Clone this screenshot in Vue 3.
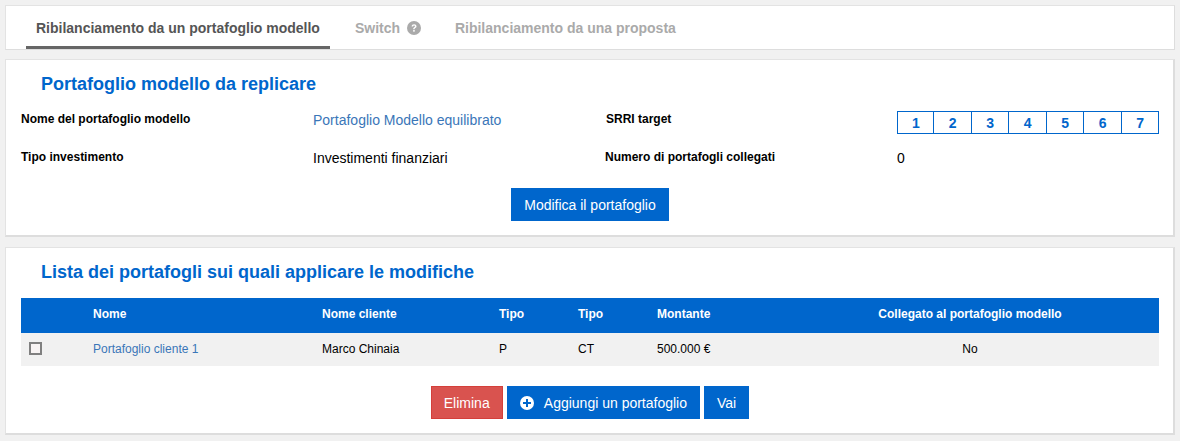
<script setup>
const srri = [1, 2, 3, 4, 5, 6, 7]
</script>

<template>
  <div class="page">
    <section class="card tabs">
      <div class="tab active">Ribilanciamento da un portafoglio modello</div>
      <div class="tab">Switch
        <svg class="help" width="14" height="14" viewBox="0 0 14 14">
          <circle cx="7" cy="7" r="7" fill="#aaa" />
          <path d="M4.6 5.4C4.7 4 5.7 3.2 7.1 3.2c1.4 0 2.4.8 2.4 2 0 1-.6 1.5-1.2 1.9-.5.3-.7.6-.7 1.2H6.2c0-1 .3-1.5 1-2 .5-.3.8-.6.8-1 0-.5-.4-.8-.9-.8-.6 0-1 .4-1 .9H4.6z" fill="#fff" />
          <rect x="6.2" y="9" width="1.5" height="1.7" fill="#fff" />
        </svg>
      </div>
      <div class="tab">Ribilanciamento da una proposta</div>
    </section>

    <section class="card model">
      <h2 class="title">Portafoglio modello da replicare</h2>
      <div class="info">
        <div class="label">Nome del portafoglio modello</div>
        <div class="value link">Portafoglio Modello equilibrato</div>
        <div class="label l2">SRRI target</div>
        <div class="srri"><span v-for="n in srri" :key="n">{{ n }}</span></div>
        <div class="label">Tipo investimento</div>
        <div class="value">Investimenti finanziari</div>
        <div class="label">Numero di portafogli collegati</div>
        <div class="value">0</div>
      </div>
      <div class="actions first"><button class="btn">Modifica il portafoglio</button></div>
    </section>

    <section class="card list">
      <h2 class="title">Lista dei portafogli sui quali applicare le modifiche</h2>
      <table>
        <colgroup>
          <col class="c0" /><col class="c1" /><col class="c2" /><col class="c3" /><col class="c4" /><col class="c5" /><col />
        </colgroup>
        <thead>
          <tr>
            <th></th><th>Nome</th><th>Nome cliente</th><th>Tipo</th><th>Tipo</th><th>Montante</th>
            <th class="center">Collegato al portafoglio modello</th>
          </tr>
        </thead>
        <tbody>
          <tr>
            <td><span class="check"></span></td>
            <td class="link">Portafoglio cliente 1</td>
            <td>Marco Chinaia</td>
            <td>P</td>
            <td>CT</td>
            <td>500.000 €</td>
            <td class="center">No</td>
          </tr>
        </tbody>
      </table>
      <div class="actions second">
        <button class="btn danger">Elimina</button>
        <button class="btn">
          <svg class="plus" width="14" height="14" viewBox="0 0 14 14">
            <circle cx="7" cy="7" r="7" fill="#fff" />
            <path d="M6 3h2v3h3v2H8v3H6V8H3V6h3z" fill="#0066cc" />
          </svg>
          Aggiungi un portafoglio
        </button>
        <button class="btn">Vai</button>
      </div>
    </section>
  </div>
</template>

<style scoped>
.page {
  width: 1180px;
  height: 441px;
  box-sizing: border-box;
  padding: 5px 5px 0;
  background: #f1f1f1;
  font-family: "Liberation Sans", Arial, sans-serif;
  color: #000;
  overflow: hidden;
}
.card {
  box-sizing: border-box;
  background: #fff;
  border: 1px solid #e3e3e3;
  border-right: 2px solid #ddd;
  border-bottom: 2px solid #ddd;
}
.tabs {
  height: 45px;
  display: flex;
  padding-left: 20px;
  gap: 14px;
  margin-bottom: 9px;
  border-bottom-width: 1px;
  border-right-width: 1px;
}
.tab {
  padding: 14px 9px 0 11px;
  font-size: 14px;
  line-height: 16px;
  font-weight: 700;
  color: #aaa;
  height: 43px;
  box-sizing: border-box;
}
.tab.active {
  color: #555;
  border-bottom: 3px solid #666;
  padding-left: 10px;
  padding-right: 10px;
}
.help {
  margin-left: 3px;
  vertical-align: -2px;
}
.model {
  height: 178px;
  margin-bottom: 10px;
  padding: 0 15px;
}
.title {
  margin: 0;
  font-size: 18px;
  line-height: 22px;
  font-weight: 700;
  color: #0066cc;
  padding-left: 20px;
}
.model .title {
  padding-top: 13px;
}
.info {
  margin-top: 16px;
  display: grid;
  grid-template-columns: 292px 292px 292px 1fr;
  grid-auto-rows: 38px;
}
.label {
  font-size: 12px;
  line-height: 16px;
  font-weight: 700;
}
.l2 { padding-left: 1px; }
.value {
  font-size: 14px;
  line-height: 16px;
  padding-top: 1px;
}
.link {
  color: #3a76b8;
}
.srri {
  display: flex;
  box-sizing: border-box;
  width: 262px;
  height: 23px;
  border: 1px solid #0066cc;
}
.srri span {
  box-sizing: border-box;
  flex: 1;
  padding-left: 1px;
  text-align: center;
  font-size: 14px;
  font-weight: 700;
  line-height: 22px;
  color: #0066cc;
  border-left: 1px solid #0066cc;
}
.srri span:first-child {
  flex: 0 0 35px;
  border-left: 0;
}
.actions {
  display: flex;
  justify-content: center;
  gap: 4px;
  padding-left: 1px;
}
.actions.first { margin-top: 1px; }
.actions.second { margin-top: 20px; }
.btn {
  box-sizing: border-box;
  height: 33px;
  border: 1px solid #0066cc;
  background: #0066cc;
  color: #fff;
  font-family: inherit;
  font-size: 14px;
  padding: 0 12px;
}
.btn.danger {
  background: #d9534f;
  border-color: #d43f3a;
}
.plus {
  margin-right: 7px;
  vertical-align: -2px;
}
.list {
  height: 188px;
  padding: 0 15px;
}
.list .title {
  padding-top: 13px;
}
table {
  width: 1138px;
  margin-top: 15px;
  border-collapse: collapse;
  table-layout: fixed;
  font-size: 12px;
}
.c0 { width: 72px; }
.c1 { width: 229px; }
.c2 { width: 177px; }
.c3 { width: 79px; }
.c4 { width: 79px; }
.c5 { width: 124px; }
th {
  background: #0066cc;
  color: #fff;
  height: 35px;
  text-align: left;
  padding: 0 0 4px;
  box-sizing: border-box;
  font-weight: 700;
}
td {
  background: #f1f1f1;
  height: 33px;
  padding: 0 0 2px;
  box-sizing: border-box;
}
.center { text-align: center; }
.check {
  display: block;
  box-sizing: border-box;
  width: 13px;
  height: 13px;
  margin-left: 8px;
  border: 2px solid #808080;
  background: #f8f4f4;
}
</style>
